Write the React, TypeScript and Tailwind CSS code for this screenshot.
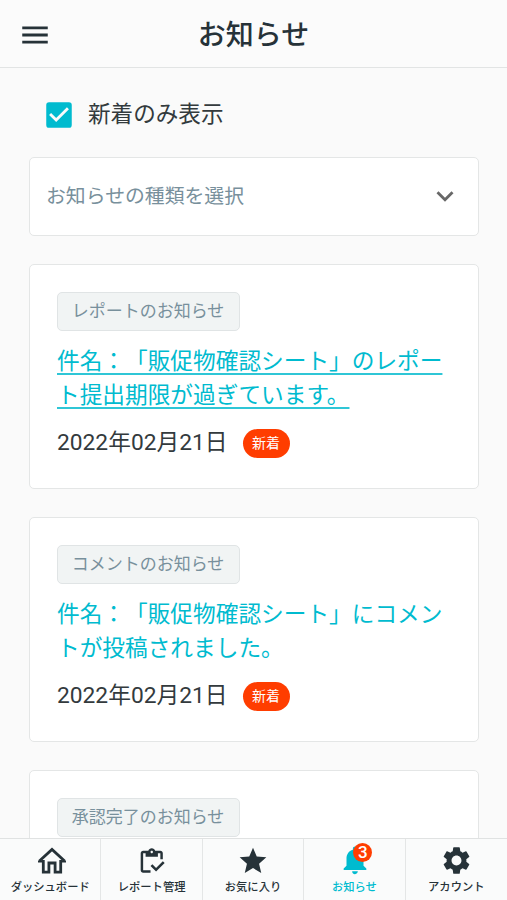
import type { ReactNode } from "react";
import { MdCheckBox, MdExpandMore, MdMenu, MdNotifications, MdSettings, MdStar } from "react-icons/md";

const HomeIcon = () => (
  <svg viewBox="0 0 34 34" className="ml-[3px] size-[34px] shrink-0" fill="none" stroke="currentColor" strokeWidth="2.8">
    <path d="M4.4 18 17 6.5 29.6 18" />
    <path d="M3 18.6h6M25 18.6h6" strokeWidth="2" />
    <path d="M8.3 17v12.2h5.6V20h6.2v9.2h5.6V17" />
  </svg>
);

const InventoryIcon = () => (
  <svg viewBox="0 0 24 24" className="mt-[3px] ml-px size-[29.5px] shrink-0" fill="currentColor">
    <path d="M5 5h2v3h10V5h2v5h2V5c0-1.1-.9-2-2-2h-4.18C14.4 1.84 13.3 1 12 1s-2.4.84-2.82 2H5c-1.1 0-2 .9-2 2v14c0 1.1.9 2 2 2h6v-2H5V5zm7-2c.55 0 1 .45 1 1s-.45 1-1 1-1-.45-1-1 .45-1 1-1z" />
    <path d="M21 11.5 15.51 17l-3.01-3L11 15.5l4.51 4.5L22.5 13 21 11.5z" />
  </svg>
);

type Notice = { tag: string; title?: string; date?: string; underlined?: boolean };

const notices: Notice[] = [
  {
    tag: "レポートのお知らせ",
    title: "件名：「販促物確認シート」のレポート提出期限が過ぎています。",
    date: "2022年02月21日",
    underlined: true,
  },
  {
    tag: "コメントのお知らせ",
    title: "件名：「販促物確認シート」にコメントが投稿されました。",
    date: "2022年02月21日",
  },
  { tag: "承認完了のお知らせ" },
];

const NoticeCard = ({ tag, title, date, underlined }: Notice) => (
  <article className="h-[225px] shrink-0 rounded-[5px] border border-[#e4e6e6] bg-white px-[27px] pt-[27px]">
    <div className="flex h-[39px] w-[183px] items-center justify-center rounded-[5px] border border-[#e0e4e5] bg-[#f1f4f4] pr-px text-[17px] text-[#78909c]">
      {tag}
    </div>
    {title && (
      <a
        className={`mt-[14px] block w-[388px] text-[22.68px] leading-[33.75px] break-all text-[#00bbcf] ${
          underlined ? "underline decoration-[#2fc6d6] decoration-[1.5px] underline-offset-[4px]" : ""
        }`}
      >
        {title}
      </a>
    )}
    {date && (
      <div className="mt-[13.5px] flex items-center gap-[15px]">
        <time className="text-[22.75px] leading-[34px] text-[#333a3d]">{date}</time>
        <span className="flex h-[29px] w-[47px] items-center justify-center rounded-full bg-[#ff3d00] text-[14px] text-white">
          新着
        </span>
      </div>
    )}
  </article>
);

const NavItem = ({ label, active, children }: { label: string; active?: boolean; children: ReactNode }) => (
  <div
    className={`flex flex-col items-center border-r border-[#e4e6e6] pt-[4px] last:border-r-0 ${
      active ? "text-[#00bbcf]" : "text-[#263238]"
    }`}
  >
    <div className="relative flex size-[34px] items-center justify-center">{children}</div>
    <span className="mt-[1.5px] text-[11.3px] leading-[17px] font-medium whitespace-nowrap">{label}</span>
  </div>
);

export default function App() {
  return (
    <div
      lang="ja"
      className="flex h-[900px] w-[507px] flex-col overflow-hidden bg-[#fafafa] font-['Roboto','Noto_Sans_CJK_JP',sans-serif] text-[#263238] [text-spacing-trim:space-all]"
    >
      <header className="grid h-[68px] shrink-0 grid-cols-[68px_1fr_68px] items-center border-b border-[#e2e4e4] bg-[#fbfbfb] pt-[2px]">
        <MdMenu className="ml-[17.5px] size-[34px]" />
        <h1 className="pt-[2px] text-center text-[28px] leading-[40px] font-medium">お知らせ</h1>
      </header>

      <main className="flex min-h-0 flex-1 flex-col overflow-hidden pr-[28px] pl-[29px]">
        <label className="mt-[30px] ml-[12.5px] flex h-[34px] shrink-0 items-center gap-[12.5px] text-[22.6px] text-[#333a3d]">
          <MdCheckBox className="mb-px size-[34px] text-[#00bbcf]" />
          新着のみ表示
        </label>
        <div className="mt-[25px] flex h-[79px] shrink-0 items-center justify-between rounded-[5px] border border-[#e4e6e6] bg-white px-[16px] text-[19.85px] text-[#78909c]">
          お知らせの種類を選択
          <MdExpandMore className="mb-[2px] size-[34px] text-[#686868]" />
        </div>
        <div className="mt-[28px] flex flex-col gap-[28px]">
          {notices.map((n) => (
            <NoticeCard key={n.tag} {...n} />
          ))}
        </div>
      </main>

      <nav className="grid h-[62px] shrink-0 grid-cols-5 border-t border-[#e0e2e2] bg-[#fafbfb]">
        <NavItem label="ダッシュボード">
          <HomeIcon />
        </NavItem>
        <NavItem label="レポート管理">
          <InventoryIcon />
        </NavItem>
        <NavItem label="お気に入り">
          <MdStar className="mt-[2px] ml-px size-[32px] shrink-0" />
        </NavItem>
        <NavItem label="お知らせ" active>
          <MdNotifications className="ml-px size-[34px] shrink-0" />
          <span className="absolute top-0 left-[16px] flex size-[19px] items-center justify-center rounded-full bg-[#ff3d00] text-[17px] leading-none font-medium text-white">
            3
          </span>
        </NavItem>
        <NavItem label="アカウント">
          <MdSettings className="mt-px size-[33px] shrink-0" />
        </NavItem>
      </nav>
    </div>
  );
}
